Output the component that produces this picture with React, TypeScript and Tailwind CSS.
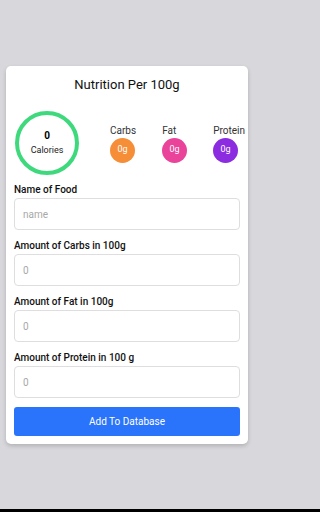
import React from 'react';

type Macro = { label: string; color: string };

const MACROS: Macro[] = [
  { label: 'Carbs', color: 'bg-[#f68d37]' },
  { label: 'Fat', color: 'bg-[#e9449a]' },
  { label: 'Protein', color: 'bg-[#8b2ce0]' },
];

const FIELDS = [
  { label: 'Name of Food', placeholder: 'name' },
  { label: 'Amount of Carbs in 100g', placeholder: '0' },
  { label: 'Amount of Fat in 100g', placeholder: '0' },
  { label: 'Amount of Protein in 100 g', placeholder: '0' },
];

export default function App() {
  return (
    <div
      className="flex h-screen w-full flex-col bg-[#d8d8dc]"
      style={{ fontFamily: 'Roboto, "Noto Sans", sans-serif' }}
    >
      <div className="flex-1 px-[6px] pt-[66px]">
        <div className="w-[242px] rounded-[5px] bg-white px-[8px] pb-[8px] pt-[9px] shadow-[0_2px_4px_rgba(0,0,0,0.18)]">
          <h1 className="text-center text-[13px] leading-[20px] text-[#111]">Nutrition Per 100g</h1>

          {/* calories ring + macro chips */}
          <div className="mt-[16px] flex items-center pl-[1px]">
            <div className="flex h-[64px] w-[64px] shrink-0 flex-col items-center justify-center rounded-full border-[4px] border-[#3fd97d]">
              <span className="text-[10px] font-bold leading-[12px] text-black">0</span>
              <span className="mt-[3px] text-[9px] leading-[11px] text-[#222]">Calories</span>
            </div>
            <div className="ml-[31px] flex shrink-0 gap-[26px]">
              {MACROS.map((m) => (
                <div key={m.label} className="flex flex-col items-start">
                  <span className="text-[10px] leading-[13px] text-[#333]">{m.label}</span>
                  <div
                    className={`mt-[1px] flex h-[25px] w-[25px] items-center justify-center rounded-full ${m.color}`}
                  >
                    <span className="text-[9px] text-white">0g</span>
                  </div>
                </div>
              ))}
            </div>
          </div>

          <div className="mt-[8px] flex flex-col">
            {FIELDS.map((f, i) => (
              <div key={f.label} className={i === 0 ? '' : 'mt-[9px]'}>
                <label className="block text-[10px] font-medium leading-[14px] text-[#111]">{f.label}</label>
                <input
                  className="mt-[1px] block h-[32px] w-full rounded-[4px] border border-[#dedede] bg-white px-[8px] text-[10px] text-[#333] outline-none placeholder:text-[#a8a8a8]"
                  placeholder={f.placeholder}
                />
              </div>
            ))}
          </div>

          <button
            type="button"
            className="mt-[9px] flex h-[29px] w-full items-center justify-center rounded-[3px] bg-[#2a74fb] text-[10px] text-white"
          >
            Add To Database
          </button>
        </div>
      </div>
      <div className="h-[3px] bg-black" />
    </div>
  );
}
